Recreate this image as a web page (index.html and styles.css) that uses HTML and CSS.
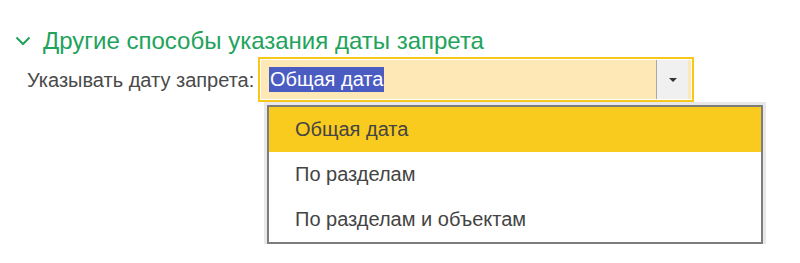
FILE: index.html
```html
<!DOCTYPE html>
<html lang="ru">
<head>
    <meta charset="UTF-8">
    <title>Другие способы указания даты запрета</title>
    <link rel="stylesheet" href="styles.css">
</head>
<body>
    <div class="group">
        <div class="group-header">
            <svg class="chevron" width="16" height="10" viewBox="0 0 16 10">
                <path d="M1.5 1.5 L8 8 L14.5 1.5" fill="none" stroke="#21a35b" stroke-width="2"/>
            </svg>
            <span class="group-title">Другие способы указания даты запрета</span>
        </div>
        <div class="field-row">
            <label class="field-label">Указывать дату запрета:</label>
            <div class="field-column">
                <div class="combo">
                    <div class="combo-inner">
                        <div class="combo-value"><span class="selected-text">Общая дата</span></div>
                        <div class="combo-button"><span class="arrow"></span></div>
                    </div>
                </div>
                <div class="choice-list">
                    <div class="choice active">Общая дата</div>
                    <div class="choice">По разделам</div>
                    <div class="choice">По разделам и объектам</div>
                </div>
            </div>
        </div>
    </div>
</body>
</html>
```

FILE: styles.css
```css
body {
    margin: 0;
    background-color: #ffffff;
    font-family: "Liberation Sans", Arial, sans-serif;
}
.group {
    padding: 26px 0 0 15px;
}
.group-header {
    display: flex;
    align-items: center;
    height: 30px;
}
.chevron {
    display: block;
    margin-right: 12px;
}
.group-title {
    color: #21a35b;
    font-size: 24px;
}
.field-row {
    display: flex;
    align-items: flex-start;
    margin-top: 1px;
}
.field-label {
    color: #4a4a4a;
    font-size: 20px;
    line-height: 24px;
    padding: 11px 0 0 12px;
    width: 231px;
}
.field-column {
    display: flex;
    flex-direction: column;
    align-items: flex-start;
}
.combo {
    width: 430px;
    border: 2px solid #f7c71b;
    background-color: #ffffff;
    padding: 1px;
}
.combo-inner {
    display: flex;
    height: 39px;
    background-color: #fde8b6;
}
.combo-value {
    flex: 1;
    display: flex;
    align-items: center;
    padding-left: 8px;
    border-right: 1px solid #a8a8a8;
}
.selected-text {
    background-color: #4a5cc2;
    color: #ffffff;
    font-size: 20px;
    line-height: 25px;
    padding: 0 1px;
}
.combo-button {
    width: 31px;
    margin-right: 3px;
    background-color: #f0f0f0;
    display: flex;
    align-items: center;
    justify-content: center;
}
.arrow {
    width: 0;
    height: 0;
    border-left: 4px solid transparent;
    border-right: 4px solid transparent;
    border-top: 4px solid #333333;
}
.choice-list {
    margin: 3px 0 0 9px;
    width: 492px;
    background-color: #ffffff;
    border: 2px solid #7d7d7d;
    box-shadow: 0 0 0 3px #e8e8e8;
}
.choice {
    height: 45px;
    line-height: 45px;
    padding-left: 26px;
    color: #444444;
    font-size: 20px;
}
.choice.active {
    background-color: #f9cb1f;
}
```
